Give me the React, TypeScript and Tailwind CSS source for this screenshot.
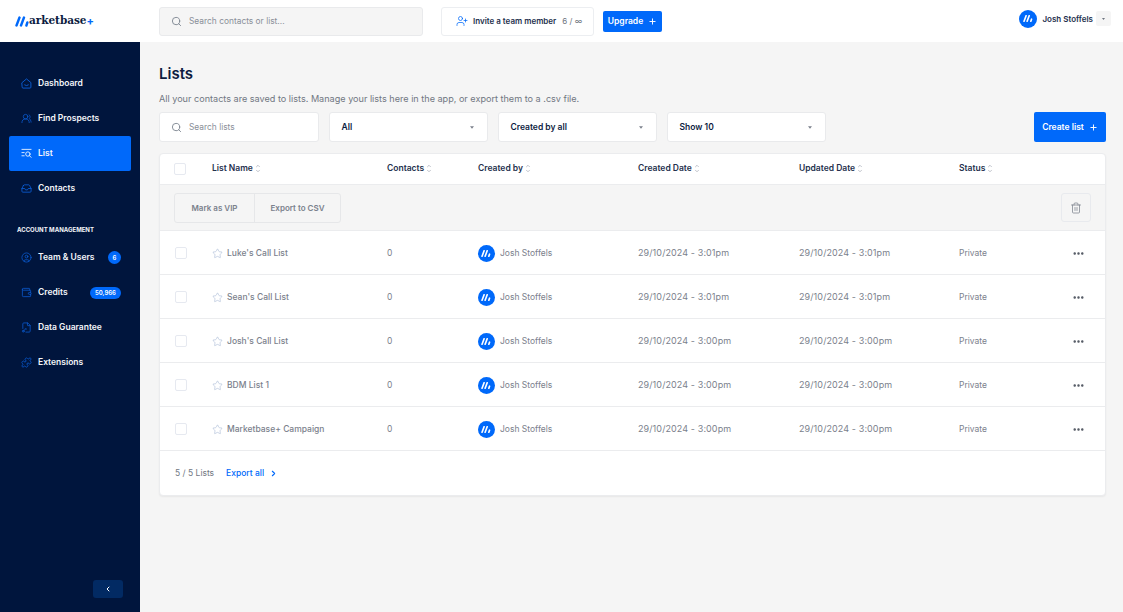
import { ChevronLeft, ChevronRight, ChevronDown, ChevronUp, Ellipsis, Plus, Search, Star, Trash2, UserPlus, UsersRound, CircleUser, Wallet, Puzzle, Inbox, FileKey2 } from 'lucide-react';

const lists = [
  { name: "Luke's Call List", time: '3:01pm' },
  { name: "Sean's Call List", time: '3:01pm' },
  { name: "Josh's Call List", time: '3:00pm' },
  { name: 'BDM List 1', time: '3:00pm' },
  { name: 'Marketbase+ Campaign', time: '3:00pm' },
];

const columns = ['List Name', 'Contacts', 'Created by', 'Created Date', 'Updated Date', 'Status'];

const gridCols = 'grid grid-cols-[52px_175px_91px_160px_161px_160px_90px_1fr] items-center';

function Mark({ className }: { className: string }) {
  return (
    <svg viewBox="0 0 16 10" className={className} fill="none" stroke="currentColor" strokeWidth="2.4" strokeLinecap="round">
      <path d="M4.5 1 L1.5 9" />
      <path d="M9 1 L6 9" />
      <path d="M12.4 6 L11.4 9" />
    </svg>
  );
}

function Avatar({ size }: { size: string }) {
  return (
    <span className={`${size} flex items-center justify-center rounded-full bg-[#0069fa] text-white`}>
      <Mark className="h-[7px] w-[11px]" />
    </span>
  );
}

function SortIcon() {
  return (
    <span className="ml-[2px] flex flex-col text-[#a9aeb8]">
      <ChevronUp size={6} strokeWidth={3} className="-mb-[1.5px]" />
      <ChevronDown size={6} strokeWidth={3} />
    </span>
  );
}

function HomeIcon() {
  return (
    <svg viewBox="0 0 12 12" className="h-[11px] w-[11px]" fill="none" stroke="currentColor" strokeWidth="1" strokeLinejoin="round" strokeLinecap="round">
      <path d="M1.2 5 L6 1 L10.8 5 V10 A1 1 0 0 1 9.8 11 H2.2 A1 1 0 0 1 1.2 10 Z" />
      <path d="M4 7.6 Q6 9.2 8 7.6" />
    </svg>
  );
}

function ListSearchIcon() {
  return (
    <svg viewBox="0 0 12 12" className="h-[11px] w-[11px]" fill="none" stroke="currentColor" strokeWidth="0.9" strokeLinecap="round">
      <path d="M1 1.5 H11" />
      <path d="M1 5 H3.5" />
      <path d="M1 8.5 H3.5" />
      <circle cx="7.5" cy="6.6" r="2.4" />
      <path d="M9.3 8.4 L11 10.2" />
    </svg>
  );
}

function NavItem({ icon, label, active, badge }: { icon: React.ReactNode; label: string; active?: boolean; badge?: React.ReactNode }) {
  return (
    <div className={`mx-[9px] flex h-[35px] items-center rounded-[2px] pl-[12px] pr-[10px] ${active ? 'bg-[#0069fa] text-white' : 'text-[#0b5fd8]'}`}>
      <span className="flex w-[17px] justify-start">{icon}</span>
      <span className="text-[8.5px] font-semibold text-[#f4f6fa]">{label}</span>
      {badge}
    </div>
  );
}

function FilterSelect({ label }: { label: string }) {
  return (
    <div className="flex h-[30px] w-[159.5px] items-center justify-between rounded-[3px] border border-[#e9eaec] bg-white pl-[12px] pr-[13px] text-[8.5px] font-semibold text-[#0d1c3f]">
      {label}
      <svg viewBox="0 0 6 4" className="h-[3px] w-[4px] fill-[#7b818c]">
        <path d="M0 0 H6 L3 4 Z" />
      </svg>
    </div>
  );
}

function Checkbox({ className }: { className: string }) {
  return <span className={`block h-[12px] w-[12px] rounded-[2px] border border-[#e6e9f0] bg-white ${className}`} />;
}

export default function App() {
  return (
    <div className="flex h-[612px] w-[1123px] flex-col overflow-hidden bg-[#f5f5f5] font-['Inter',sans-serif]">
      <header className="flex h-[42px] shrink-0 items-center bg-white">
        <div className="flex w-[159px] items-center pl-[15px]">
          <Mark className="h-[11px] w-[16px] text-[#0069fa]" />
          <span className="ml-[-2px] font-['DejaVu_Serif',serif] text-[10.5px] font-bold tracking-[-0.05px] text-[#0d1c3f]">arketbase</span>
          <span className="text-[11px] font-bold text-[#0069fa]">+</span>
        </div>
        <div className="flex h-[29px] w-[264px] items-center rounded-[3px] border border-[#e9eaec] bg-[#f5f5f5] pl-[11px] text-[8.4px] text-[#8a9099]">
          <Search size={11} className="mr-[7px] text-[#7d8590]" />
          Search contacts or list...
        </div>
        <div className="ml-[18px] flex h-[29px] w-[153px] items-center rounded-[3px] border border-[#eceef1] bg-white pl-[14px] text-[8px]">
          <UserPlus size={12} strokeWidth={1.5} className="mr-[5px] text-[#0069fa]" />
          <span className="font-semibold text-[#24304d]">Invite a team member</span>
          <span className="ml-[6px] text-[#6f7580]">6 / ∞</span>
        </div>
        <div className="ml-[9px] flex h-[21px] w-[59px] items-center justify-center rounded-[2px] bg-[#0069fa] text-[8.5px] font-semibold text-white">
          Upgrade
          <Plus size={9} strokeWidth={2.5} className="ml-[5px]" />
        </div>
        <div className="mb-[5px] ml-auto flex items-center pr-[12px]">
          <Avatar size="h-[18px] w-[18px]" />
          <span className="ml-[5px] text-[8px] font-semibold text-[#24304d]">Josh Stoffels</span>
          <span className="ml-[3px] flex h-[15px] w-[15px] items-center justify-center rounded-[2px] bg-[#f5f5f5]">
            <svg viewBox="0 0 6 4" className="h-[2px] w-[3px] fill-[#6f7580]">
              <path d="M0 0 H6 L3 4 Z" />
            </svg>
          </span>
        </div>
      </header>

      <div className="flex min-h-0 flex-1">
        <aside className="flex w-[140px] shrink-0 flex-col bg-[#00153d] pt-[24px]">
          <NavItem icon={<HomeIcon />} label="Dashboard" />
          <NavItem icon={<UsersRound size={11} strokeWidth={1.6} />} label="Find Prospects" />
          <NavItem icon={<ListSearchIcon />} label="List" active />
          <NavItem icon={<Inbox size={11} strokeWidth={1.8} />} label="Contacts" />
          <div className="mt-[20px] mb-[6px] pl-[17px] text-[6px] font-bold leading-[8px] text-[#f4f6fa]">ACCOUNT MANAGEMENT</div>
          <NavItem
            icon={<CircleUser size={11} strokeWidth={1.6} />}
            label="Team & Users"
            badge={<span className="ml-auto flex h-[13px] w-[13px] items-center justify-center rounded-full bg-[#0069fa] text-[6px] font-semibold text-white">6</span>}
          />
          <NavItem
            icon={<Wallet size={11} strokeWidth={1.6} />}
            label="Credits"
            badge={<span className="ml-auto flex h-[12px] w-[31px] items-center justify-center rounded-full bg-[#0069fa] text-[6px] font-semibold text-white">50,966</span>}
          />
          <NavItem icon={<FileKey2 size={11} strokeWidth={1.6} />} label="Data Guarantee" />
          <NavItem icon={<Puzzle size={11} strokeWidth={1.6} />} label="Extensions" />
          <div className="mt-auto mb-[14px] mr-[17px] flex h-[18px] w-[30px] items-center justify-center self-end rounded-[3px] bg-[#022a63] text-white">
            <ChevronLeft size={8} strokeWidth={3} />
          </div>
        </aside>

        <main className="min-w-0 flex-1 pl-[19px] pr-[17px] pt-[22px]">
          <h1 className="text-[15px] font-semibold leading-[20px] text-[#0d1c3f]">Lists</h1>
          <p className="mt-[9px] text-[9.1px] leading-[12px] text-[#717782]">All your contacts are saved to lists. Manage your lists here in the app, or export them to a .csv file.</p>
          <div className="mt-[7px] flex items-center gap-[9.5px]">
            <div className="flex h-[30px] w-[160px] items-center rounded-[3px] border border-[#e9eaec] bg-white pl-[11px] text-[8.4px] text-[#8a9099]">
              <Search size={11} className="mr-[7px] text-[#7d8590]" />
              Search lists
            </div>
            <FilterSelect label="All" />
            <FilterSelect label="Created by all" />
            <FilterSelect label="Show 10" />
            <div className="ml-auto flex h-[30px] w-[72px] items-center justify-center rounded-[2px] bg-[#0069fa] text-[8.5px] font-semibold text-white">
              Create list
              <Plus size={9} strokeWidth={2.5} className="ml-[5px]" />
            </div>
          </div>

          <section className="mt-[11px] w-[947px] overflow-hidden rounded-[4px] border border-[#ebecee] bg-white shadow-[0_1px_2px_rgba(0,0,0,0.06)]">
            <div className={`${gridCols} h-[31px] border-b border-[#ebecee] pb-[1px] text-[8.5px] font-semibold text-[#24304d]`}>
              <Checkbox className="ml-[14px]" />
              {columns.map((label) => (
                <div key={label} className="flex items-center">
                  {label}
                  <SortIcon />
                </div>
              ))}
            </div>
            <div className="flex h-[46px] items-center justify-between border-b border-[#ebecee] bg-[#f5f5f5] pl-[14px] pr-[14px]">
              <div className="flex h-[30px] overflow-hidden rounded-[3px] border border-[#e6e7e9] text-[8px] font-semibold text-[#7b818c]">
                <span className="flex w-[80px] items-center justify-center border-r border-[#e6e7e9]">Mark as VIP</span>
                <span className="flex w-[85px] items-center justify-center">Export to CSV</span>
              </div>
              <span className="flex h-[29px] w-[30px] items-center justify-center rounded-[3px] border border-[#e8eaee] text-[#7b818c]">
                <Trash2 size={12} strokeWidth={1.5} />
              </span>
            </div>
            {lists.map((row) => (
              <div key={row.name} className={`${gridCols} h-[44px] border-b border-[#ebecee] pt-[1px] text-[8.5px] text-[#7b818c]`}>
                <Checkbox className="ml-[15px]" />
                <div className="flex items-center font-medium">
                  <Star size={11} strokeWidth={1.3} className="mr-[4px] text-[#a9b9d6]" />
                  {row.name}
                </div>
                <div>0</div>
                <div className="flex items-center">
                  <Avatar size="h-[17px] w-[17px]" />
                  <span className="ml-[5px]">Josh Stoffels</span>
                </div>
                <div className="text-[9px] tracking-[0.1px]">29/10/2024 - {row.time}</div>
                <div className="text-[9px] tracking-[0.1px]">29/10/2024 - {row.time}</div>
                <div>Private</div>
                <div className="flex justify-end pr-[20px] text-[#4b515c]">
                  <Ellipsis size={13} strokeWidth={2.5} />
                </div>
              </div>
            ))}
            <div className="flex h-[44px] items-center pl-[15px] text-[8.5px] text-[#717782]">
              5 / 5 Lists
              <span className="ml-[12px] font-medium text-[#0069fa]">Export all</span>
              <ChevronRight size={9} strokeWidth={3} className="ml-[5px] text-[#0069fa]" />
            </div>
          </section>
        </main>
      </div>
    </div>
  );
}
